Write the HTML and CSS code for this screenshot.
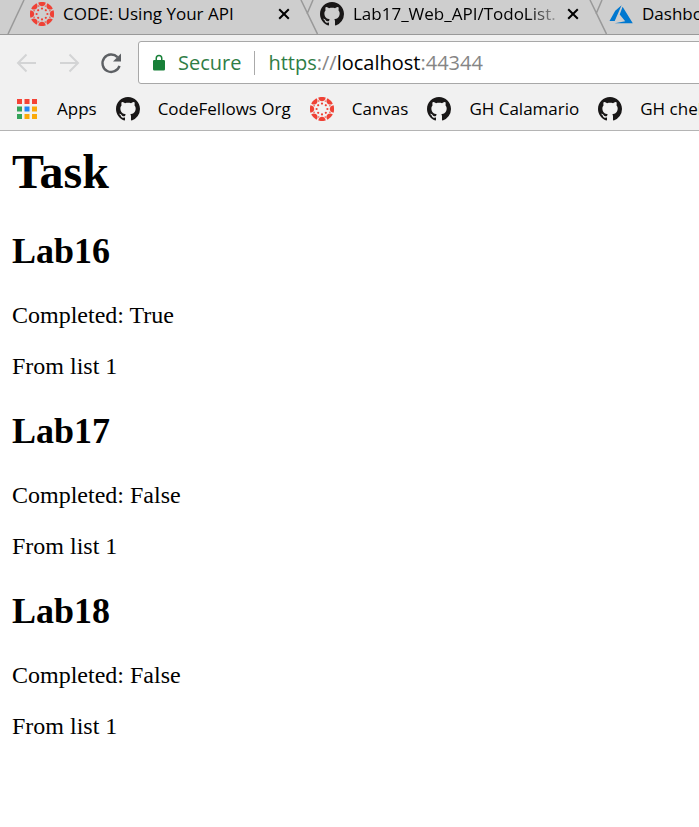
FILE: index.html
```html
<!DOCTYPE html>
<html lang="en">
<head>
<meta charset="utf-8">
<meta name="viewport" content="width=device-width, initial-scale=1">
<title>Task</title>
<link rel="stylesheet" href="styles.css">
</head>
<body>
<svg class="sprite" aria-hidden="true">
  <symbol id="github" viewBox="0 0 16 16"><path d="M8 0C3.58 0 0 3.58 0 8c0 3.54 2.29 6.53 5.47 7.59.4.07.55-.17.55-.38 0-.19-.01-.82-.01-1.49-2.01.37-2.53-.49-2.69-.94-.09-.23-.48-.94-.82-1.13-.28-.15-.68-.52-.01-.53.63-.01 1.08.58 1.23.82.72 1.21 1.87.87 2.33.66.07-.52.28-.87.51-1.07-1.78-.2-3.64-.89-3.64-3.95 0-.87.31-1.59.82-2.15-.08-.2-.36-1.02.08-2.12 0 0 .67-.21 2.2.82.64-.18 1.32-.27 2-.27s1.36.09 2 .27c1.53-1.04 2.2-.82 2.2-.82.44 1.1.16 1.92.08 2.12.51.56.82 1.27.82 2.15 0 3.07-1.87 3.75-3.65 3.95.29.25.54.73.54 1.48 0 1.07-.01 1.93-.01 2.2 0 .21.15.46.55.38A8.01 8.01 0 0 0 16 8c0-4.42-3.58-8-8-8z"/></symbol>
  <symbol id="canvas" viewBox="0 0 24 24">
    <g id="canvas-half">
      <g id="canvas-quarter">
        <g id="canvas-part"><path d="M8.300.400Q12-.500 15.700.400C15.400 5.500 8.600 5.500 8.300.400Z"/><circle cx="12" cy="6.600" r="1.100"/><circle cx="15.300" cy="4.100" r=".7"/></g>
        <use href="#canvas-part" transform="rotate(45 12 12)"/>
      </g>
      <use href="#canvas-quarter" transform="rotate(90 12 12)"/>
    </g>
    <use href="#canvas-half" transform="rotate(180 12 12)"/>
  </symbol>
  <symbol id="close" viewBox="0 0 12 12"><path d="M1.200 1.200l9.600 9.600m0-9.600l-9.600 9.600" fill="none" stroke="currentColor" stroke-width="2"/></symbol>
  <symbol id="divider" viewBox="0 0 18 34"><path d="M1 0l16.500 34M13 0L7 14" fill="none" stroke="currentColor" stroke-width="1.500"/></symbol>
</svg>
<header class="browser">
  <nav class="tabs" aria-label="Tabs">
    <svg class="edge" viewBox="0 0 18 34" aria-hidden="true"><path d="M17 0L1 34" fill="none" stroke="currentColor" stroke-width="1.500"/></svg>
    <div class="tab first">
      <svg class="icon red" aria-hidden="true"><use href="#canvas"/></svg>
      <a class="title" href="#">CODE: Using Your API</a>
      <button class="close" aria-label="Close CODE tab"><svg><use href="#close"/></svg></button>
      <svg class="divider" aria-hidden="true"><use href="#divider"/></svg>
    </div>
    <div class="tab">
      <svg class="icon dark" aria-hidden="true"><use href="#github"/></svg>
      <a class="title fade" href="#">Lab17_Web_API/TodoList.</a>
      <button class="close" aria-label="Close Lab17 tab"><svg><use href="#close"/></svg></button>
      <svg class="divider" aria-hidden="true"><use href="#divider"/></svg>
    </div>
    <div class="tab">
      <svg class="icon azure" viewBox="0 0 24 24" aria-hidden="true"><path d="M12.600 3.200L6.200 8.700.500 19h5.200zM13.600 4.700L10.700 12.400l5.500 6.900-10.500 1.900H23.800z"/></svg>
      <a class="title" href="#">Dashboard</a>
    </div>
  </nav>
  <div class="toolbar">
    <button class="nav" aria-label="Back"><svg viewBox="0 0 24 24"><path d="M21 12H3m8.500-8.500L3 12l8.500 8.500"/></svg></button>
    <button class="nav" aria-label="Forward"><svg viewBox="0 0 24 24"><path d="M3 12h18m-8.500-8.500L21 12l-8.500 8.500"/></svg></button>
    <button class="nav reload" aria-label="Reload"><svg viewBox="0 0 24 24"><path d="M20.500 14.800A8.700 8.700 0 1 1 18.500 6.200"/><path class="solid" d="M22 2.500v8h-8z"/></svg></button>
    <div class="address">
      <button class="secure"><svg viewBox="0 0 12 17" aria-hidden="true"><path d="M1.200 6H2.500V4.200a3.500 3.500 0 0 1 7 0V6h1.300Q12 6 12 7.200v8q0 1.300-1.300 1.300H1.300Q0 16.500 0 15.200v-8Q0 6 1.200 6zM4 6h4V4.200a2 2 0 0 0-4 0z"/></svg>Secure</button>
      <div class="url" role="textbox" aria-label="Address" contenteditable="true" spellcheck="false"><span class="scheme">https</span><span class="muted">://</span>localhost<span class="muted">:44344</span></div>
    </div>
  </div>
  <nav class="bookmarks" aria-label="Bookmarks">
    <a href="#"><svg class="icon" viewBox="0 0 24 24" aria-hidden="true"><path fill="#f44336" d="M2 2h5v5H2zM9.500 2h5v5h-5zM17 2h5v5h-5z"/><path fill="#34a45a" d="M2 9.500h5v5H2zM2 17h5v5H2z"/><path fill="#2186f5" d="M9.500 9.500h5v5h-5z"/><path fill="#fba90a" d="M17 9.500h5v5h-5zM9.500 17h5v5h-5zM17 17h5v5h-5z"/></svg>Apps</a>
    <a href="#"><svg class="icon dark" aria-hidden="true"><use href="#github"/></svg>CodeFellows Org</a>
    <a href="#"><svg class="icon red" aria-hidden="true"><use href="#canvas"/></svg>Canvas</a>
    <a href="#"><svg class="icon dark" aria-hidden="true"><use href="#github"/></svg>GH Calamario</a>
    <a href="#"><svg class="icon dark" aria-hidden="true"><use href="#github"/></svg>GH chelsea</a>
  </nav>
</header>
<main>
  <h1>Task</h1>
  <h2>Lab16</h2>
  <p>Completed: True</p>
  <p>From list 1</p>
  <h2>Lab17</h2>
  <p>Completed: False</p>
  <p>From list 1</p>
  <h2>Lab18</h2>
  <p>Completed: False</p>
  <p>From list 1</p>
</main>
</body>
</html>
```
FILE: styles.css
```css
* { box-sizing: border-box; }

body {
  margin: 0;
  background: #fff;
  color: #000;
}

svg { display: block; flex: none; }
.sprite { position: absolute; width: 0; height: 0; }

button {
  padding: 0;
  border: 0;
  background: none;
  font: inherit;
  color: inherit;
}

a { color: inherit; text-decoration: none; }

.browser {
  overflow: hidden;
  background: #f1f1f1;
  border-bottom: 1px solid #b4b4b4;
  font-family: "Segoe UI", "Open Sans", sans-serif;
  font-size: 17px;
}

.icon { width: 24px; height: 24px; }
.red { fill: #ef4135; }
.dark { fill: #191717; }
.azure { fill: #0078d0; }

.tabs {
  display: flex;
  height: 35px;
  padding-left: 7px;
  background: #cecece;
  border-bottom: 1px solid #999;
}

.edge, .divider { width: 18px; height: 34px; color: #999; }

.tab {
  display: flex;
  flex: none;
  align-items: flex-start;
  width: 289px;
  padding-left: 2px;
}
.tab.first { width: 293px; padding-left: 5px; }

.tab .icon { margin: 2px 9px 0 0; }
.title {
  flex: 1;
  min-width: 0;
  overflow: hidden;
  white-space: nowrap;
  line-height: 28px;
}
.fade { mask-image: linear-gradient(to right, #000 85%, rgb(0 0 0 / 15%)); }
.close { margin: 8px 10px 0 8px; }
.close svg { width: 12px; height: 12px; }

.toolbar {
  display: flex;
  align-items: center;
  gap: 18px;
  padding: 6px 0 0 15px;
}
.nav svg {
  width: 24px;
  height: 24px;
  fill: none;
  stroke: #d3d4d5;
  stroke-width: 2;
}
.nav.reload svg { stroke: #5d6064; stroke-width: 2.4; }
.nav.reload .solid { fill: #5d6064; stroke: none; }

.address {
  display: flex;
  flex: 1;
  align-items: center;
  height: 43px;
  margin: 0 -4px 0 -3px;
  padding-left: 14px;
  background: #fff;
  border: 1px solid #a8a8a8;
  border-radius: 3px;
  font-size: 20px;
}
.secure {
  display: flex;
  align-items: center;
  gap: 13px;
  height: 24px;
  padding-right: 13px;
  border-right: 1px solid #aaa;
  color: #2f7d46;
}
.secure svg { width: 12px; height: 17px; fill: #188038; }
.url { flex: 1; padding-left: 13px; outline: 0; white-space: nowrap; }
.scheme { color: #2f7d46; }
.muted { color: #858585; }

.bookmarks {
  display: flex;
  gap: 19px;
  padding: 13px 0 9px 15px;
}
.bookmarks a {
  display: flex;
  flex: none;
  align-items: center;
  gap: 18px;
  height: 24px;
  line-height: 22px;
}

main {
  padding: 13px 12px;
  font-family: "Liberation Serif", "Times New Roman", serif;
  font-size: 24px;
  line-height: 27px;
}
h1 { margin: 0 0 30px; font-size: 48px; line-height: 56px; }
h2 { margin: 30px 0; font-size: 36px; line-height: 42px; }
p { margin: 24px 0; }
```
